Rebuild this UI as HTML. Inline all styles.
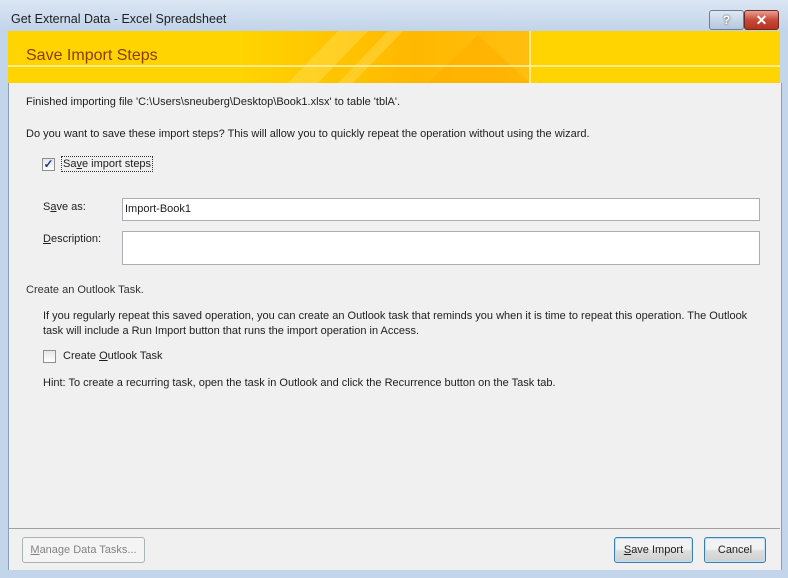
<!DOCTYPE html>
<html><head><style>
body{margin:0;width:788px;height:578px;overflow:hidden;font-family:"Liberation Sans",sans-serif;font-size:11px;color:#1e1e1e;background:#c3d5ea;position:relative}
.abs{position:absolute}
.title{left:0;top:0;width:788px;height:31px;background:linear-gradient(#dbe6f3,#c2d4ea)}
.content{left:8px;top:83px;width:772px;height:487px;background:#f0f0f0;border-left:1px solid #8aa0b8;border-right:1px solid #8aa0b8}
.banner{left:8px;top:31px;width:772px;height:52px;background:#ffd400;overflow:hidden}
.btn{border:1px solid #707070;border-radius:3px;background:linear-gradient(#f2f2f2 45%,#dddddd 55%,#cfcfcf);text-align:center;line-height:24px;height:24px}
.inp{background:#fff;border:1px solid #abadb3}
u{text-decoration:underline}
</style></head><body>
<div class="abs title"></div>
<div class="abs" style="left:11px;top:12px;font-size:12.5px;color:#1e1e1e">Get External Data - Excel Spreadsheet</div>
<div class="abs" style="left:709px;top:10px;width:33px;height:18px;border:1px solid #6c7f96;border-radius:3px;background:linear-gradient(#dfe8f3,#b5c7dc);color:#fff;text-align:center;font-weight:bold;font-size:12px;line-height:18px;text-shadow:0 0 2px #333">?</div>
<div class="abs" style="left:744px;top:10px;width:33px;height:18px;border:1px solid #6e2a22;border-radius:3px;background:linear-gradient(#e9a093,#c74a38 50%,#b8321f);color:#fff;text-align:center;font-weight:bold;font-size:14px;line-height:18px">✕</div>
<div class="abs banner">
<svg width="772" height="52" style="position:absolute;left:0;top:0">
<defs><linearGradient id="g" x1="0" x2="1"><stop offset="0" stop-color="#ffd400"/><stop offset="0.6" stop-color="#ffb800"/><stop offset="1" stop-color="#ffbf10"/></linearGradient></defs>
<rect x="230" y="0" width="292" height="52" fill="url(#g)"/>
<polygon points="420,52 470,4 522,52" fill="#ffb000" opacity="0.7"/>
<polygon points="330,0 360,0 310,52 280,52" fill="#ffe060" opacity="0.4"/>
<polygon points="380,0 395,0 345,52 330,52" fill="#ffe060" opacity="0.4"/>
<line x1="0" y1="35" x2="772" y2="35" stroke="#fff3b0" stroke-width="1.5"/>
<line x1="522" y1="0" x2="522" y2="52" stroke="#fff3b0" stroke-width="1.5"/>
</svg>
<div class="abs" style="left:18px;top:16px;font-size:16px;color:#8a3c00">Save Import Steps</div>
</div>
<div class="abs content"></div>
<div class="abs" style="left:26px;top:96px">Finished importing file 'C:\Users\sneuberg\Desktop\Book1.xlsx' to table 'tblA'.</div>
<div class="abs" style="left:26px;top:128px">Do you want to save these import steps? This will allow you to quickly repeat the operation without using the wizard.</div>
<div class="abs" style="left:42px;top:158px;width:11px;height:11px;border:1px solid #8e8f8f;background:linear-gradient(#e6e6e6,#fff);color:#1d3e8a;font-size:12px;line-height:11px;text-align:center;font-weight:bold">✓</div>
<div class="abs" style="left:61px;top:156px;border:1px dotted #333;padding:1px 1px">Sa<u>v</u>e import steps</div>
<div class="abs" style="left:43px;top:201px">S<u>a</u>ve as:</div>
<div class="abs inp" style="left:122px;top:198px;width:636px;height:21px"><span style="position:absolute;left:2px;top:4px">Import-Book1</span></div>
<div class="abs" style="left:43px;top:233px"><u>D</u>escription:</div>
<div class="abs inp" style="left:122px;top:231px;width:636px;height:32px"></div>
<div class="abs" style="left:26px;top:284px;color:#333">Create an Outlook Task.</div>
<div class="abs" style="left:43px;top:309px;width:710px;line-height:15px">If you regularly repeat this saved operation, you can create an Outlook task that reminds you when it is time to repeat this operation. The Outlook task will include a Run Import button that runs the import operation in Access.</div>
<div class="abs" style="left:43px;top:350px;width:11px;height:11px;border:1px solid #8e8f8f;background:linear-gradient(#e6e6e6,#fff)"></div>
<div class="abs" style="left:63px;top:350px">Create <u>O</u>utlook Task</div>
<div class="abs" style="left:43px;top:377px">Hint: To create a recurring task, open the task in Outlook and click the Recurrence button on the Task tab.</div>
<div class="abs" style="left:9px;top:528px;width:771px;border-top:1px solid #a0a0a0"></div>
<div class="abs btn" style="left:22px;top:537px;width:121px;border-color:#adb2b5;background:#f4f4f4;color:#838383"><u>M</u>anage Data Tasks...</div>
<div class="abs btn" style="left:614px;top:537px;width:77px;border-color:#3c7fb1;box-shadow:inset 0 0 0 1px #b8e0f6"><u>S</u>ave Import</div>
<div class="abs btn" style="left:704px;top:537px;width:60px;border-color:#3c7fb1;box-shadow:inset 0 0 0 1px #b8e0f6">Cancel</div>
</body></html>
